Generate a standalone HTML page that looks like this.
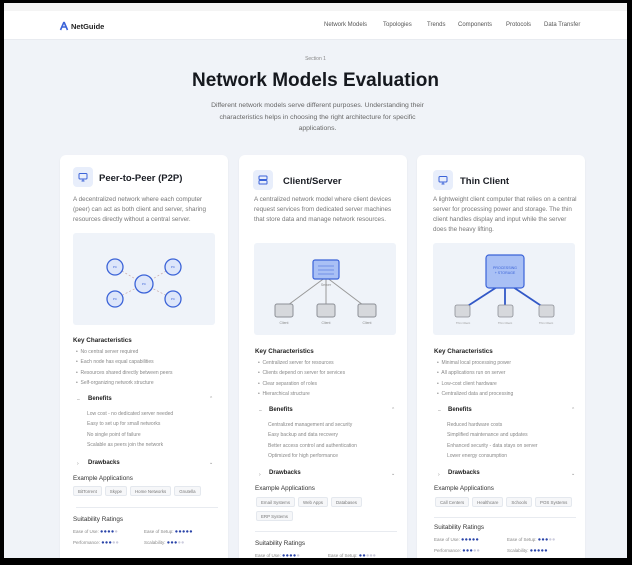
<!DOCTYPE html>
<html><head><meta charset="utf-8"><style>
*{margin:0;padding:0;box-sizing:border-box}
html,body{width:632px;height:565px;overflow:hidden;background:#000;font-family:"Liberation Sans",sans-serif}
#f{position:absolute;left:4px;top:3px;width:623px;height:555px;background:#f0f3f8;overflow:hidden}
.a{position:absolute}
.hdr{left:0;top:0;width:623px;height:37px;background:#fff;border-top:8px solid #f4f4f4;border-bottom:1px solid #e8ebf0}
.nav{font-size:6px;color:#555;top:19px}
.card{background:#fff;border-radius:6px;width:168px;height:420px;top:152px;box-shadow:0 1px 2px rgba(0,0,0,.05)}
.ic{width:20px;height:20px;border-radius:4px;background:#e8eefb}
.t{font-size:9.5px;font-weight:bold;color:#1a1d24}
.d{font-size:6.3px;line-height:10px;color:#777;width:146px}
.dg{width:142px;height:92px;background:#eff3f9;border-radius:3px}
.h{font-size:6.3px;color:#222;font-weight:bold}
.li{font-size:5px;color:#888;line-height:10.3px}
.tg{display:flex;flex-wrap:wrap;gap:4px 3px}
.tag{display:block;font-size:4.4px;line-height:5px;color:#777;border:1px solid #e4e8ee;background:#f6f7f9;border-radius:2px;padding:1.5px 4px}
.hr{height:1px;background:#e8ebf0;width:142px}
.r{font-size:4.5px;color:#888}
.r b{color:#2a44a8;font-size:5.5px;letter-spacing:.3px}
.r i{color:#ccd;font-style:normal;font-size:5.5px}
</style></head><body><div id="f">
<div class="a hdr"></div>
<svg class="a" style="left:55px;top:18px" width="10" height="10" viewBox="0 0 10 10"><path d="M5 1 L1.5 9 M5 1 L8.5 9 M3 6 L7 6" stroke="#3b63d8" stroke-width="1.6" fill="none"/></svg>
<div class="a" style="left:67px;top:19px;font-size:7.5px;color:#222;font-weight:bold">NetGuide</div>
<div class="a nav" style="left:320px">Network Models</div>
<div class="a nav" style="left:379px">Topologies</div>
<div class="a nav" style="left:423px">Trends</div>
<div class="a nav" style="left:454px">Components</div>
<div class="a nav" style="left:502px">Protocols</div>
<div class="a nav" style="left:540px">Data Transfer</div>
<div class="a" style="left:0;width:623px;top:53px;text-align:center;font-size:5px;color:#888">Section 1</div>
<div class="a" style="left:0;width:623px;top:67px;text-align:center;font-size:19px;font-weight:bold;color:#15181e">Network Models Evaluation</div>
<div class="a" style="left:196px;width:235px;top:97px;text-align:center;font-size:6.8px;line-height:11.5px;color:#666">Different network models serve different purposes. Understanding their characteristics helps in choosing the right architecture for specific applications.</div>

<!-- card 1 -->
<div class="a card" style="left:56px"></div>
<div class="a ic" style="left:69px;top:164px"></div>
<svg class="a" style="left:74px;top:169px" width="10" height="10" viewBox="0 0 10 10"><rect x="1" y="1.5" width="8" height="5.5" rx="1" fill="none" stroke="#3b63d8"/><path d="M3.5 9h3M5 7v2" stroke="#3b63d8"/></svg>
<div class="a t" style="left:95px;top:170px">Peer-to-Peer (P2P)</div>
<div class="a d" style="left:69px;top:192px">A decentralized network where each computer (peer) can act as both client and server, sharing resources directly without a central server.</div>
<div class="a dg" style="left:69px;top:230px"></div>
<svg class="a" style="left:69px;top:230px" width="142" height="92"><g stroke="#c9a9a9" stroke-dasharray="2 2" stroke-width=".7"><path d="M42 34L71 51M100 34L71 51M42 66L71 51M100 66L71 51"/></g><g fill="#dde6fa" stroke="#3b63d8" stroke-width="1.3"><circle cx="42" cy="34" r="8"/><circle cx="100" cy="34" r="8"/><circle cx="71" cy="51" r="9"/><circle cx="42" cy="66" r="8"/><circle cx="100" cy="66" r="8"/></g><g font-size="3" fill="#3b63d8" text-anchor="middle"><text x="42" y="35">PC</text><text x="100" y="35">PC</text><text x="71" y="52">PC</text><text x="42" y="67">PC</text><text x="100" y="67">PC</text></g></svg>
<div class="a h" style="left:69px;top:334px">Key Characteristics</div>
<div class="a li" style="left:72px;top:344px">•&nbsp; No central server required<br>•&nbsp; Each node has equal capabilities<br>•&nbsp; Resources shared directly between peers<br>•&nbsp; Self-organizing network structure</div>
<div class="a li" style="left:73px;top:392px">–</div><div class="a h" style="left:84px;top:393px;font-size:6px">Benefits</div><div class="a li" style="left:205px;top:391px">⌃</div>
<div class="a li" style="left:83px;top:406px">Low cost - no dedicated server needed<br>Easy to set up for small networks<br>No single point of failure<br>Scalable as peers join the network</div>
<div class="a li" style="left:73px;top:456px">›</div><div class="a h" style="left:84px;top:457px;font-size:6px">Drawbacks</div><div class="a li" style="left:205px;top:455px">⌄</div>
<div class="a h" style="left:69px;top:472px;font-weight:normal;color:#333">Example Applications</div>
<div class="a tg" style="left:69px;top:483px;width:150px"><span class="tag">BitTorrent</span><span class="tag">Skype</span><span class="tag">Home Networks</span><span class="tag">Gnutella</span></div>
<div class="a hr" style="left:72px;top:504px"></div>
<div class="a h" style="left:69px;top:513px;font-weight:normal;color:#333">Suitability Ratings</div>
<div class="a r" style="left:69px;top:526px">Ease of Use: <b>●●●●</b><i>●</i></div>
<div class="a r" style="left:140px;top:526px">Ease of Setup: <b>●●●●●</b></div>
<div class="a r" style="left:69px;top:537px">Performance: <b>●●●</b><i>●●</i></div>
<div class="a r" style="left:140px;top:537px">Scalability: <b>●●●</b><i>●●</i></div>

<!-- card 2 -->
<div class="a card" style="left:235px"></div>
<div class="a ic" style="left:249px;top:167px"></div>
<svg class="a" style="left:254px;top:172px" width="10" height="10" viewBox="0 0 10 10"><rect x="1" y="1" width="8" height="3.5" rx=".8" fill="none" stroke="#3b63d8"/><rect x="1" y="5.5" width="8" height="3.5" rx=".8" fill="none" stroke="#3b63d8"/></svg>
<div class="a t" style="left:279px;top:173px">Client/Server</div>
<div class="a d" style="left:250px;top:192px;width:138px">A centralized network model where client devices request services from dedicated server machines that store data and manage network resources.</div>
<div class="a dg" style="left:250px;top:240px"></div>
<svg class="a" style="left:250px;top:240px" width="142" height="92"><path d="M72 34L30 65M72 34V65M72 34L113 65" stroke="#999" stroke-width="1"/><rect x="59" y="17" width="26" height="19" rx="2" fill="#a9c0f5" stroke="#3b63d8" stroke-width="1.2"/><path d="M64 23h16M64 27h16M64 31h16" stroke="#3b63d8" stroke-width=".6"/><g fill="#d6d8dc" stroke="#8c8f96" stroke-width="1"><rect x="21" y="61" width="18" height="13" rx="2"/><rect x="63" y="61" width="18" height="13" rx="2"/><rect x="104" y="61" width="18" height="13" rx="2"/></g><g font-size="3.5" fill="#888" text-anchor="middle"><text x="72" y="43">Server</text><text x="30" y="81">Client</text><text x="72" y="81">Client</text><text x="113" y="81">Client</text></g></svg>
<div class="a h" style="left:251px;top:345px">Key Characteristics</div>
<div class="a li" style="left:254px;top:355px">•&nbsp; Centralized server for resources<br>•&nbsp; Clients depend on server for services<br>•&nbsp; Clear separation of roles<br>•&nbsp; Hierarchical structure</div>
<div class="a li" style="left:255px;top:403px">–</div><div class="a h" style="left:265px;top:404px;font-size:6px">Benefits</div><div class="a li" style="left:387px;top:402px">⌃</div>
<div class="a li" style="left:264px;top:417px">Centralized management and security<br>Easy backup and data recovery<br>Better access control and authentication<br>Optimized for high performance</div>
<div class="a li" style="left:255px;top:467px">›</div><div class="a h" style="left:265px;top:467px;font-size:6px">Drawbacks</div><div class="a li" style="left:387px;top:466px">⌄</div>
<div class="a h" style="left:251px;top:482px;font-weight:normal;color:#333">Example Applications</div>
<div class="a tg" style="left:252px;top:494px;width:130px"><span class="tag">Email Systems</span><span class="tag">Web Apps</span><span class="tag">Databases</span><span class="tag">ERP Systems</span></div>
<div class="a hr" style="left:251px;top:528px"></div>
<div class="a h" style="left:251px;top:537px;font-weight:normal;color:#333">Suitability Ratings</div>
<div class="a r" style="left:251px;top:550px">Ease of Use: <b>●●●●</b><i>●</i></div>
<div class="a r" style="left:324px;top:550px">Ease of Setup: <b>●●</b><i>●●●</i></div>

<!-- card 3 -->
<div class="a card" style="left:413px"></div>
<div class="a ic" style="left:429px;top:167px"></div>
<svg class="a" style="left:434px;top:172px" width="10" height="10" viewBox="0 0 10 10"><rect x="1" y="1.5" width="8" height="5.5" rx="1" fill="none" stroke="#3b63d8"/><path d="M3.5 9h3M5 7v2" stroke="#3b63d8"/></svg>
<div class="a t" style="left:456px;top:173px">Thin Client</div>
<div class="a d" style="left:429px;top:192px">A lightweight client computer that relies on a central server for processing power and storage. The thin client handles display and input while the server does the heavy lifting.</div>
<div class="a dg" style="left:429px;top:240px"></div>
<svg class="a" style="left:429px;top:240px" width="142" height="92"><path d="M64 44L30 66M72 44V66M80 44L113 66" stroke="#3258c7" stroke-width="1.8"/><rect x="53" y="12" width="38" height="33" rx="3" fill="#a9c0f5" stroke="#3b63d8" stroke-width="1.2"/><g font-size="3.6" fill="#3b63d8" text-anchor="middle"><text x="72" y="26">PROCESSING</text><text x="72" y="31">+ STORAGE</text></g><g fill="#d6d8dc" stroke="#8c8f96" stroke-width=".8"><rect x="22" y="62" width="15" height="12" rx="2"/><rect x="65" y="62" width="15" height="12" rx="2"/><rect x="106" y="62" width="15" height="12" rx="2"/></g><g font-size="3" fill="#999" text-anchor="middle"><text x="30" y="81">Thin Client</text><text x="72" y="81">Thin Client</text><text x="113" y="81">Thin Client</text></g></svg>
<div class="a h" style="left:430px;top:345px">Key Characteristics</div>
<div class="a li" style="left:433px;top:355px">•&nbsp; Minimal local processing power<br>•&nbsp; All applications run on server<br>•&nbsp; Low-cost client hardware<br>•&nbsp; Centralized data and processing</div>
<div class="a li" style="left:434px;top:403px">–</div><div class="a h" style="left:444px;top:404px;font-size:6px">Benefits</div><div class="a li" style="left:567px;top:402px">⌃</div>
<div class="a li" style="left:443px;top:417px">Reduced hardware costs<br>Simplified maintenance and updates<br>Enhanced security - data stays on server<br>Lower energy consumption</div>
<div class="a li" style="left:434px;top:467px">›</div><div class="a h" style="left:444px;top:467px;font-size:6px">Drawbacks</div><div class="a li" style="left:567px;top:466px">⌄</div>
<div class="a h" style="left:430px;top:482px;font-weight:normal;color:#333">Example Applications</div>
<div class="a tg" style="left:431px;top:494px;width:160px"><span class="tag">Call Centers</span><span class="tag">Healthcare</span><span class="tag">Schools</span><span class="tag">POS Systems</span></div>
<div class="a hr" style="left:430px;top:514px"></div>
<div class="a h" style="left:430px;top:521px;font-weight:normal;color:#333">Suitability Ratings</div>
<div class="a r" style="left:430px;top:534px">Ease of Use: <b>●●●●●</b></div>
<div class="a r" style="left:503px;top:534px">Ease of Setup: <b>●●●</b><i>●●</i></div>
<div class="a r" style="left:430px;top:545px">Performance: <b>●●●</b><i>●●</i></div>
<div class="a r" style="left:503px;top:545px">Scalability: <b>●●●●●</b></div>
</div></body></html>
